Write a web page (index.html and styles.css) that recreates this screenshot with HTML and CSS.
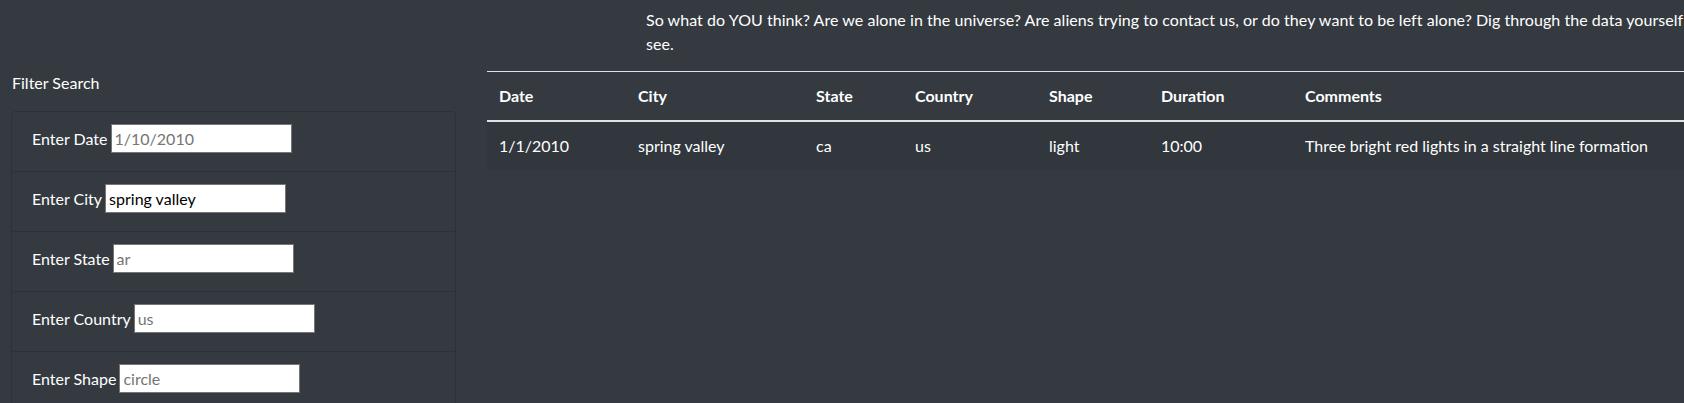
FILE: index.html
```html
<!DOCTYPE html>
<html lang="en">
<head>
<meta charset="utf-8">
<title>UFO Sightings</title>
<link rel="stylesheet" href="styles.css">
</head>
<body>
<div class="page">
  <p class="intro"><span class="intro-line">So what do YOU think? Are we alone in the universe? Are aliens trying to contact us, or do they want to be left alone? Dig through the data yourself and</span><br>see.</p>

  <div class="main">
    <aside class="sidebar">
      <div class="sidebar-title">Filter Search</div>
      <ul class="filters">
        <li class="filter-item"><label for="datetime">Enter Date</label><input id="datetime" type="text" placeholder="1/10/2010"></li>
        <li class="filter-item"><label for="city">Enter City</label><input id="city" type="text" value="spring valley"></li>
        <li class="filter-item"><label for="state">Enter State</label><input id="state" type="text" placeholder="ar"></li>
        <li class="filter-item"><label for="country">Enter Country</label><input id="country" type="text" placeholder="us"></li>
        <li class="filter-item"><label for="shape">Enter Shape</label><input id="shape" type="text" placeholder="circle"></li>
      </ul>
    </aside>

    <section class="results">
      <table class="ufo-table">
        <thead>
          <tr>
            <th class="c-date">Date</th>
            <th class="c-city">City</th>
            <th class="c-state">State</th>
            <th class="c-country">Country</th>
            <th class="c-shape">Shape</th>
            <th class="c-duration">Duration</th>
            <th class="c-comments">Comments</th>
          </tr>
        </thead>
        <tbody>
          <tr>
            <td>1/1/2010</td>
            <td>spring valley</td>
            <td>ca</td>
            <td>us</td>
            <td>light</td>
            <td>10:00</td>
            <td>Three bright red lights in a straight line formation</td>
          </tr>
        </tbody>
      </table>
    </section>
  </div>
</div>
</body>
</html>
```

FILE: styles.css
```css
html, body {
  margin: 0;
  padding: 0;
  overflow: hidden;
  background: #343a40;
}

body {
  font-family: "Segoe UI", Lato, "Liberation Sans", sans-serif;
  font-size: 16px;
  line-height: 24px;
  color: #ffffff;
}

.page {
  padding-top: 8px;
}

.intro {
  margin: 0 0 0 646px;
  white-space: nowrap;
  letter-spacing: 0.05px;
}

.main {
  display: flex;
  gap: 31px;
  margin-top: 15px;
  padding-left: 11px;
}

.sidebar {
  flex: none;
  width: 445px;
}

.sidebar-title {
  margin: 0 0 16px 1px;
}

.filters {
  list-style: none;
  margin: 0;
  padding: 0;
  border: 1px solid rgba(0, 0, 0, 0.125);
  border-radius: 4px;
}

.filter-item {
  display: flex;
  align-items: center;
  gap: 3px;
  padding: 12px 20px 18px 20px;
  border-bottom: 1px solid rgba(0, 0, 0, 0.125);
}

.filter-item:last-child {
  border-bottom: none;
}

.filter-item input {
  box-sizing: border-box;
  width: 181px;
  height: 29px;
  margin: 0;
  padding: 1px 3px;
  border: 1px solid #767676;
  background: #ffffff;
  color: #000000;
  font-family: inherit;
  font-size: 16px;
  line-height: 24px;
}

.filter-item input::placeholder {
  color: #757575;
}

.results {
  flex: none;
  width: 1300px;
}

.ufo-table {
  width: 100%;
  border-collapse: collapse;
}

.ufo-table th,
.ufo-table td {
  padding: 12px;
  text-align: left;
  vertical-align: top;
  border-top: 1px solid #dee2e6;
}

.ufo-table th {
  font-weight: bold;
  border-bottom: 2px solid #dee2e6;
}

.ufo-table tbody tr:nth-of-type(odd) {
  background: rgba(0, 0, 0, 0.05);
}

.c-date { width: 115px; }
.c-city { width: 154px; }
.c-state { width: 75px; }
.c-country { width: 110px; }
.c-shape { width: 88px; }
.c-duration { width: 120px; }
```
